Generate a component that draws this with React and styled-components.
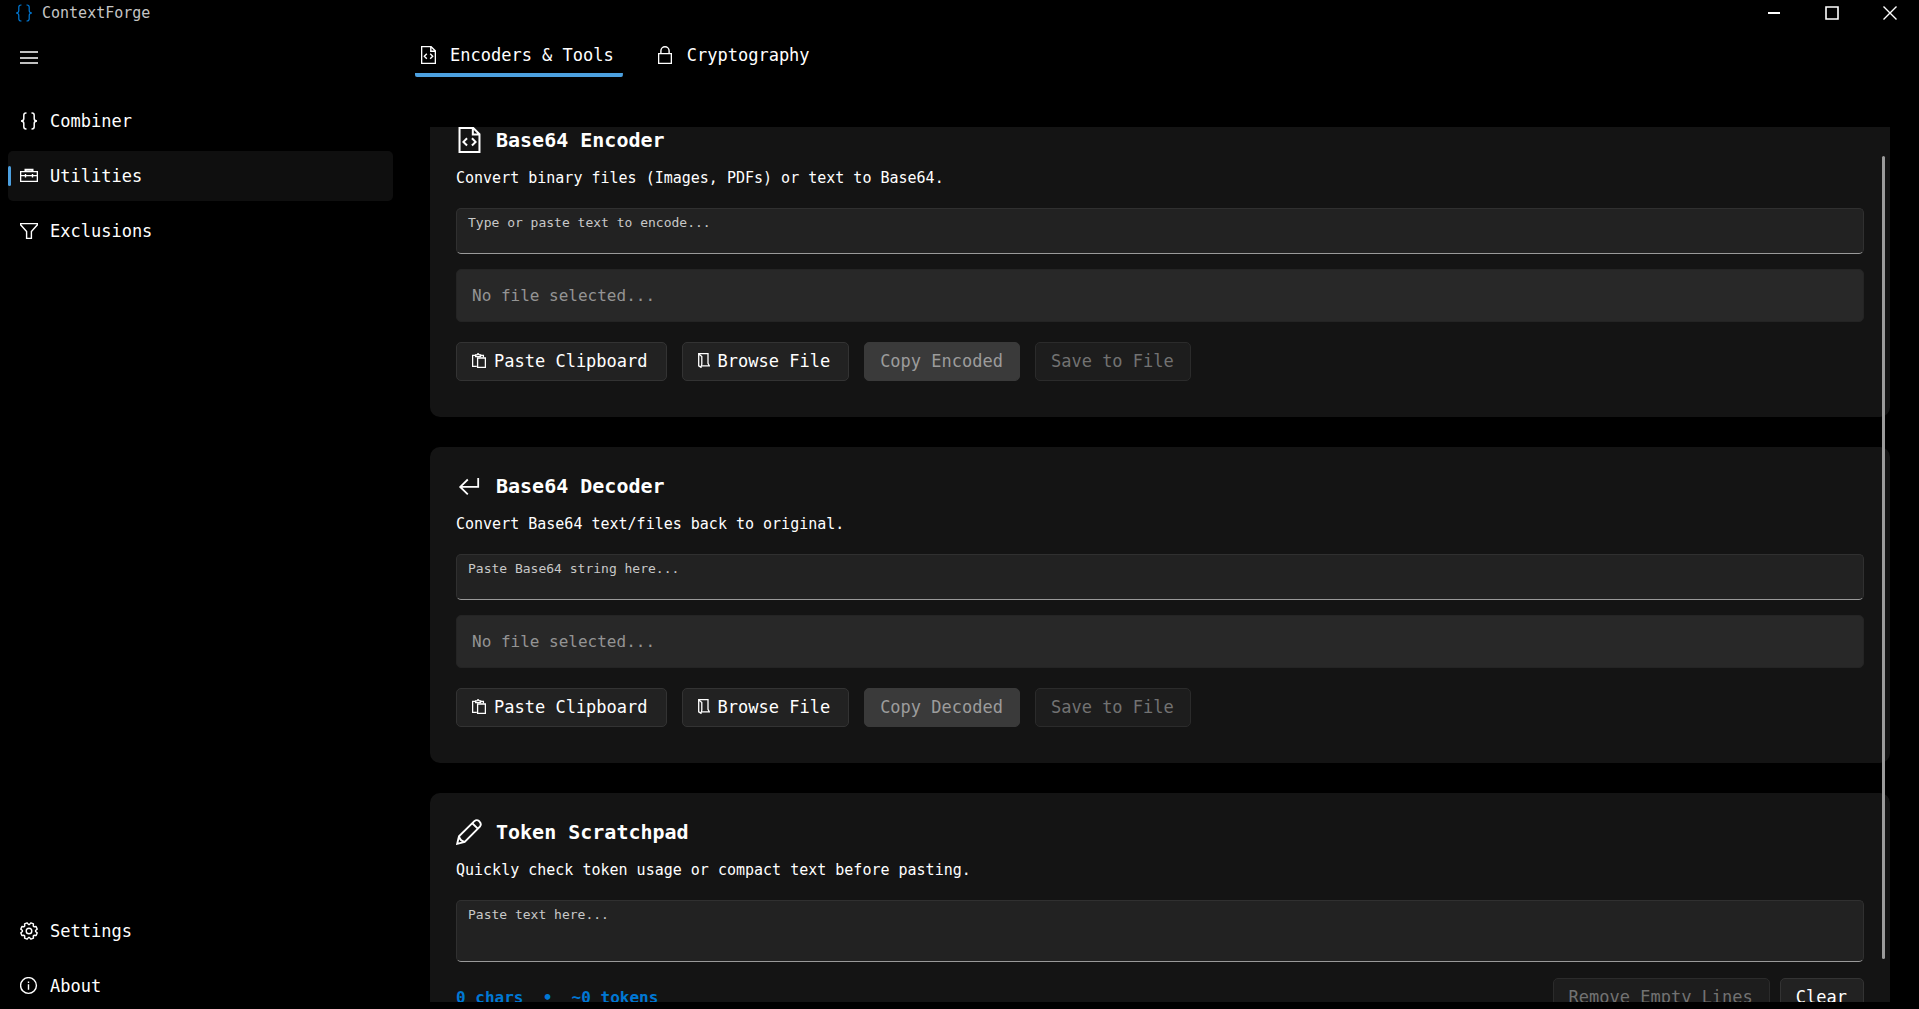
import React, { useLayoutEffect, useRef, useState } from "react";
import styled, { createGlobalStyle } from "styled-components";

const GlobalStyle = createGlobalStyle`
  * {
    box-sizing: border-box;
  }
  body {
    margin: 0;
    background: #000;
    color: #fff;
    font-family: "DejaVu Sans Mono", monospace;
    font-size: 17px;
  }
  button, input, textarea {
    font-family: inherit;
    font-size: inherit;
    color: inherit;
    margin: 0;
  }
`;

// eight teeth, with a notch pointing straight up
const gearPoints = Array.from({ length: 8 }, (_, i) => {
  const at = (deg, r) => {
    const a = ((i * 45 + deg) * Math.PI) / 180;
    return `${(9 + r * Math.sin(a)).toFixed(2)},${(9 - r * Math.cos(a)).toFixed(2)}`;
  };
  return [at(-5, 6.6), at(5, 6.6), at(13, 8.4), at(32, 8.4)].join(" ");
}).join(" ");

const Svg = ({ w, h, box, stroke = 1.4, children }) => (
  <svg
    width={w}
    height={h}
    viewBox={box || `0 0 ${w} ${h}`}
    fill="none"
    stroke="currentColor"
    strokeWidth={stroke}
    aria-hidden="true"
  >
    {children}
  </svg>
);

const BracesIcon = ({ size = 18, stroke = 1.5 }) => (
  <Svg w={size} h={size} box="0 0 18 18" stroke={stroke}>
    <path d="M6.5 1H6Q3.8 1 3.8 3.2V6.5Q3.8 9 1 9Q3.8 9 3.8 11.5V14.8Q3.8 17 6 17H6.5" />
    <path d="M11.5 1H12Q14.2 1 14.2 3.2V6.5Q14.2 9 17 9Q14.2 9 14.2 11.5V14.8Q14.2 17 12 17H11.5" />
  </Svg>
);

const MenuIcon = () => (
  <Svg w={18} h={18}>
    <path d="M0 4H18M0 10H18M0 15H18" />
  </Svg>
);

const ToolboxIcon = () => (
  <Svg w={18} h={18}>
    <path d="M.6 4.6H17.4V14.4H.6zM.6 8.6H17.4" />
    <path d="M5.5 4.5V2.8H12.5V4.5" strokeWidth="2" />
    <path d="M5.5 7V10.5M12.5 7V10.5" />
  </Svg>
);

const FilterIcon = () => (
  <Svg w={18} h={18}>
    <path d="M.6 1.6H17.4V2.8L11.4 9.5V16.4H6.6V9.5L.6 2.8z" />
  </Svg>
);

const GearIcon = () => (
  <Svg w={18} h={18}>
    <polygon points={gearPoints} strokeLinejoin="round" />
    <circle cx="9" cy="9" r="2.8" />
  </Svg>
);

const InfoIcon = () => (
  <Svg w={18} h={18}>
    <circle cx="8.5" cy="8.5" r="7.9" />
    <path d="M8.5 7.3V12.8M8.5 4.6V6.1" />
  </Svg>
);

const FileCodeIcon = ({ w = 15, h = 18 }) => (
  <Svg w={w} h={h} box="0 0 15 18">
    <path d="M.6.6H10L14.4 5V17.4H.6zM9.8.6V5.2H14.4" />
    <path d="M5.8 7.8L3.3 10.3L5.8 12.8M9.2 7.8L11.7 10.3L9.2 12.8" />
  </Svg>
);

const LockIcon = () => (
  <Svg w={14} h={18}>
    <path d="M.6 7.6H13.4V17.4H.6zM2.9 7.6V4.8A4.1 4.1 0 0 1 11.1 4.8V7.6" />
  </Svg>
);

const ReturnIcon = () => (
  <Svg w={26} h={26} stroke={1.8}>
    <path d="M11.8 6.5L4.2 13.9L11.8 21.3M4.2 13.9H22.2V5" />
  </Svg>
);

const PencilIcon = () => (
  <Svg w={26} h={26} stroke={1.9}>
    <path d="M1.2 24.8L3 17.2L18.6 1.9Q20.8 .2 23.3 2.3Q25.8 4.8 24.1 7.3L8.7 22.9z" />
    <path d="M16.3 4.2L21.8 9.6M3 17.2Q4 21.8 8.7 22.9" />
  </Svg>
);

const PasteIcon = () => (
  <Svg w={14} h={15} stroke={1.3}>
    <path d="M4.8 13.4H.6V2.3H3.6M8.6 2.3H11.4V4.4" />
    <path d="M3.6 3.6V1.8H5L6 .6L7.2 1.8H8.6V3.6z" />
    <path d="M5.6 5H13.4V14.4H5.6z" />
  </Svg>
);

const FolderIcon = () => (
  <Svg w={12} h={15} stroke={1.3}>
    <path d="M.7.7L3.8 3.6V11.2L3 14.3L.7 12.8z" />
    <path d="M.7.7H10V10.4L11.3 12.9H4" />
  </Svg>
);

function Tool({ id, icon, title, text, placeholder, tall, children }) {
  return (
    <Card aria-labelledby={id}>
      <CardTitle id={id}>
        <TitleIcon>{icon}</TitleIcon>
        {title}
      </CardTitle>
      <Description>{text}</Description>
      <TextArea aria-labelledby={id} placeholder={placeholder} $tall={tall} />
      {children}
    </Card>
  );
}

function FileActions({ id, copyLabel }) {
  return (
    <>
      <FileBox
        id={`${id}-file`}
        type="text"
        aria-label="Selected file"
        placeholder="No file selected..."
        readOnly
      />
      <Actions>
        <Button type="button">
          <PasteIcon />
          Paste Clipboard
        </Button>
        <Button type="button">
          <FolderIcon />
          Browse File
        </Button>
        <Button type="button" $primary disabled>
          {copyLabel}
        </Button>
        <Button type="button" disabled>
          Save to File
        </Button>
      </Actions>
    </>
  );
}

function App() {
  const [page, setPage] = useState("Utilities");
  const [tab, setTab] = useState("encoders");
  const scroller = useRef(null);

  useLayoutEffect(() => {
    scroller.current.scrollTop = 26;
  }, []);

  const navItem = (label, icon) => (
    <NavItem
      type="button"
      $active={page === label}
      onClick={() => setPage(label)}
    >
      <NavIcon>{icon}</NavIcon>
      {label}
    </NavItem>
  );

  return (
    <Window>
      <GlobalStyle />
      <TitleBar>
        <Brand>
          <BrandIcon>
            <BracesIcon stroke={1.2} />
          </BrandIcon>
          ContextForge
        </Brand>
        <WindowButton type="button" aria-label="Minimize">
          <Svg w={14} h={14} stroke={2}>
            <path d="M1 7H13" />
          </Svg>
        </WindowButton>
        <WindowButton type="button" aria-label="Maximize">
          <Svg w={14} h={14} stroke={1.6}>
            <path d="M1 1H13V13H1z" />
          </Svg>
        </WindowButton>
        <WindowButton type="button" aria-label="Close">
          <Svg w={14} h={14}>
            <path d="M.5 .5L13.5 13.5M13.5 .5L.5 13.5" />
          </Svg>
        </WindowButton>
      </TitleBar>

      <Body>
        <Sidebar>
          <NavItem type="button" aria-label="Toggle menu">
            <NavIcon>
              <MenuIcon />
            </NavIcon>
          </NavItem>
          <NavGroup>
            {navItem("Combiner", <BracesIcon />)}
            {navItem("Utilities", <ToolboxIcon />)}
            {navItem("Exclusions", <FilterIcon />)}
          </NavGroup>
          <NavFooter>
            {navItem("Settings", <GearIcon />)}
            {navItem("About", <InfoIcon />)}
          </NavFooter>
        </Sidebar>

        <Main>
          <Tabs role="tablist">
            <Tab
              type="button"
              role="tab"
              aria-selected={tab === "encoders"}
              $active={tab === "encoders"}
              onClick={() => setTab("encoders")}
            >
              <TabIcon>
                <FileCodeIcon />
              </TabIcon>
              Encoders &amp; Tools
            </Tab>
            <Tab
              type="button"
              role="tab"
              aria-selected={tab === "crypto"}
              $active={tab === "crypto"}
              onClick={() => setTab("crypto")}
            >
              <TabIcon>
                <LockIcon />
              </TabIcon>
              Cryptography
            </Tab>
          </Tabs>

          <Viewport>
            <Scroller ref={scroller}>
              <Tool
                id="encoder"
                icon={<FileCodeIcon w={23} h={26} />}
                title="Base64 Encoder"
                text="Convert binary files (Images, PDFs) or text to Base64."
                placeholder="Type or paste text to encode..."
              >
                <FileActions id="encoder" copyLabel="Copy Encoded" />
              </Tool>
              <Tool
                id="decoder"
                icon={<ReturnIcon />}
                title="Base64 Decoder"
                text="Convert Base64 text/files back to original."
                placeholder="Paste Base64 string here..."
              >
                <FileActions id="decoder" copyLabel="Copy Decoded" />
              </Tool>
              <Tool
                id="scratchpad"
                icon={<PencilIcon />}
                title="Token Scratchpad"
                text="Quickly check token usage or compact text before pasting."
                placeholder="Paste text here..."
                tall
              >
                <StatsRow>
                  <Stats>{"0 chars  •  ~0 tokens"}</Stats>
                  <Button type="button" disabled>
                    Remove Empty Lines
                  </Button>
                  <Button type="button">Clear</Button>
                </StatsRow>
              </Tool>
            </Scroller>
            <Thumb />
          </Viewport>
        </Main>
      </Body>
    </Window>
  );
}

export default App;

const Window = styled.div`
  height: 100vh;
  display: flex;
  flex-direction: column;
  overflow: hidden;
`;
const TitleBar = styled.header`
  height: 26px;
  flex: none;
  display: flex;
  align-items: stretch;
`;
const Brand = styled.div`
  flex: 1;
  display: flex;
  align-items: center;
  gap: 9px;
  padding-left: 15px;
  font-size: 15px;
  color: #c5c5c5;
`;
const BrandIcon = styled.span`
  display: flex;
  color: #0078d4;
`;
const WindowButton = styled.button`
  width: 58px;
  padding: 0;
  border: 0;
  background: none;
  display: flex;
  align-items: center;
  justify-content: center;
`;
const Body = styled.div`
  flex: 1;
  min-height: 0;
  display: grid;
  grid-template-columns: 400px 1fr;
`;
const Sidebar = styled.nav`
  display: flex;
  flex-direction: column;
  padding: 6px 7px 0 8px;
`;
const NavGroup = styled.div`
  display: grid;
  grid-auto-rows: 50px;
  gap: 5px;
  margin-top: 14px;
`;
const NavFooter = styled.div`
  display: grid;
  grid-auto-rows: 46px;
  gap: 9px;
  margin-top: auto;
`;
const NavItem = styled.button`
  min-height: 46px;
  display: flex;
  align-items: center;
  gap: 12px;
  padding: 0 12px 0 9px;
  border: 0;
  border-radius: 5px;
  background: ${({ $active }) => ($active ? "#0f0f0f" : "none")};
  text-align: left;

  ${Sidebar} > & {
    height: 50px;
  }
  &::before {
    content: "";
    width: 3px;
    height: 20px;
    margin: 0 -3px 0 -9px;
    border-radius: 2px;
    background: ${({ $active }) => ($active ? "#4ca0e0" : "transparent")};
  }
`;
const NavIcon = styled.span`
  width: 18px;
  flex: none;
  display: flex;
  justify-content: center;
`;
const Main = styled.main`
  min-width: 0;
  min-height: 0;
  display: flex;
  flex-direction: column;
  padding: 7px 29px 7px 15px;
`;
const Tabs = styled.div`
  display: flex;
  gap: 29px;
`;
const Tab = styled.button`
  height: 44px;
  display: flex;
  align-items: center;
  gap: 14px;
  padding: 0 9px 0 5px;
  border: 0;
  background: linear-gradient(#4ca0e0, #4ca0e0) bottom / 100%
    ${({ $active }) => ($active ? "4px" : "0")} no-repeat;
  border-radius: 2px;
`;
const TabIcon = styled.span`
  width: 16px;
  flex: none;
  display: flex;
  justify-content: center;
`;
const Viewport = styled.div`
  position: relative;
  flex: 1;
  min-height: 0;
  margin: 50px 0 0 15px;
`;
const Scroller = styled.div`
  height: 100%;
  overflow-y: auto;
  scrollbar-width: none;
  display: flex;
  flex-direction: column;
  gap: 30px;
`;
const Thumb = styled.div`
  position: absolute;
  top: 29px;
  right: 5px;
  bottom: 43px;
  width: 3px;
  border-radius: 2px;
  background: #9a9a9a;
`;
const Card = styled.section`
  flex: none;
  display: flex;
  flex-direction: column;
  padding: 26px 26px 36px;
  border-radius: 10px;
  background: #141414;
`;
const CardTitle = styled.h2`
  display: flex;
  align-items: center;
  gap: 14px;
  height: 26px;
  margin: 0;
  font-size: 20px;
  font-weight: bold;
`;
const TitleIcon = styled.span`
  width: 26px;
  display: flex;
  justify-content: center;
`;
const Description = styled.p`
  margin: 12px 0 17px;
  font-size: 15px;
  line-height: 26px;
`;
const TextArea = styled.textarea`
  display: block;
  width: 100%;
  height: ${({ $tall }) => ($tall ? "62px" : "46px")};
  padding: 4px 11px;
  border: 1px solid #303030;
  border-bottom-color: #9a9a9a;
  border-radius: 5px;
  background: #222;
  font-size: 13px;
  line-height: 20px;
  resize: none;
  outline: none;

  &::placeholder {
    color: #c8c8c8;
  }
`;
const FileBox = styled.input`
  width: 100%;
  height: 53px;
  margin-top: 15px;
  padding: 0 15px;
  border: 1px solid #242424;
  border-radius: 5px;
  background: #282828;
  font-size: 16px;
  outline: none;

  &::placeholder {
    color: #949494;
  }
`;
const Actions = styled.div`
  display: flex;
  flex-wrap: wrap;
  gap: 15px;
  margin-top: 20px;
`;
const Button = styled.button`
  height: 39px;
  display: flex;
  align-items: center;
  gap: 8px;
  padding: 0 16px 2px 15px;
  border: 1px solid #333;
  border-radius: 5px;
  background: #222;
  white-space: nowrap;

  &:has(svg) {
    padding-right: 18px;
  }
  &:disabled {
    color: ${({ $primary }) => ($primary ? "#9c9c9c" : "#727272")};
    background: ${({ $primary }) => ($primary ? "#3a3a3a" : "#1d1d1d")};
    border-color: ${({ $primary }) => ($primary ? "#3a3a3a" : "#2b2b2b")};
  }
`;
const StatsRow = styled.div`
  display: flex;
  align-items: center;
  gap: 10px;
  margin-top: 16px;
`;
const Stats = styled.span`
  flex: 1;
  color: #0078d4;
  font-size: 16px;
  font-weight: bold;
  white-space: pre;
`;
